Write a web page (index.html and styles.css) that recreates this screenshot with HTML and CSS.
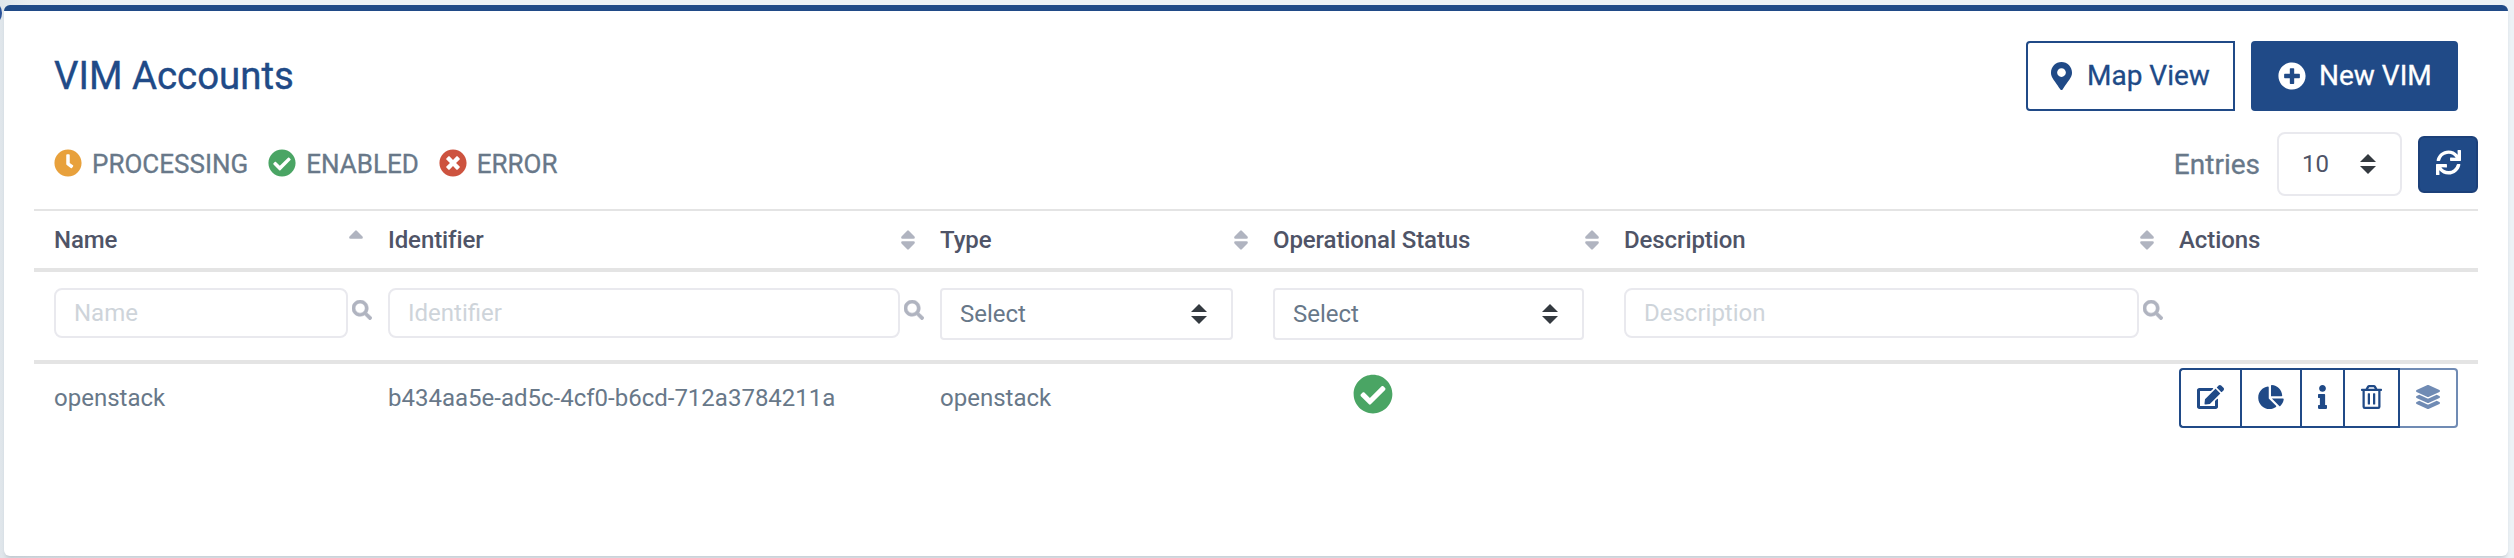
FILE: index.html
```html
<!DOCTYPE html>
<html lang="en">
<head>
<meta charset="utf-8">
<title>VIM Accounts</title>
<link rel="stylesheet" href="styles.css">
</head>
<body>
<svg class="sprite" aria-hidden="true">
  <symbol id="clock" viewBox="0 0 512 512"><path d="M256,8C119,8,8,119,8,256S119,504,256,504,504,393,504,256,393,8,256,8Zm92.49,313h0l-20,25a16,16,0,0,1-22.49,2.5h0l-67-49.72a40,40,0,0,1-15-31.23V112a16,16,0,0,1,16-16h32a16,16,0,0,1,16,16V256l58,42.5A16,16,0,0,1,348.49,321Z"/></symbol>
  <symbol id="check" viewBox="0 0 512 512"><path d="M504 256c0 136.967-111.033 248-248 248S8 392.967 8 256 119.033 8 256 8s248 111.033 248 248zM227.314 387.314l184-184c6.248-6.248 6.248-16.379 0-22.627l-22.627-22.627c-6.248-6.249-16.379-6.249-22.628 0L216 308.118l-70.059-70.059c-6.248-6.248-16.379-6.248-22.628 0l-22.627 22.627c-6.248 6.248-6.248 16.379 0 22.627l104 104c6.249 6.249 16.379 6.249 22.628.001z"/></symbol>
  <symbol id="times" viewBox="0 0 512 512"><path d="M256 8C119 8 8 119 8 256s111 248 248 248 248-111 248-248S393 8 256 8zm121.600 313.100c4.700 4.700 4.700 12.300 0 17L338 377.600c-4.700 4.700-12.300 4.700-17 0L256 312l-65.100 65.600c-4.700 4.700-12.300 4.700-17 0L134.400 338c-4.700-4.700-4.700-12.300 0-17l65.600-65-65.600-65.100c-4.700-4.700-4.700-12.300 0-17l39.600-39.600c4.700-4.700 12.300-4.700 17 0l65 65.700 65.100-65.600c4.700-4.700 12.300-4.700 17 0l39.600 39.600c4.700 4.700 4.700 12.300 0 17L312 256l65.600 65.100z"/></symbol>
  <symbol id="plus" viewBox="0 0 512 512"><path d="M256 8C119 8 8 119 8 256s111 248 248 248 248-111 248-248S393 8 256 8zm144 276c0 6.600-5.400 12-12 12h-92v92c0 6.600-5.400 12-12 12h-56c-6.600 0-12-5.400-12-12v-92h-92c-6.600 0-12-5.400-12-12v-56c0-6.600 5.400-12 12-12h92v-92c0-6.600 5.400-12 12-12h56c6.600 0 12 5.400 12 12v92h92c6.600 0 12 5.400 12 12v56z"/></symbol>
  <symbol id="pin" viewBox="0 0 384 512"><path d="M172.268 501.670C26.970 291.031 0 269.413 0 192 0 85.961 85.961 0 192 0s192 85.961 192 192c0 77.413-26.970 99.031-172.268 309.670-9.535 13.774-29.930 13.773-39.464 0zM192 272c44.183 0 80-35.817 80-80s-35.817-80-80-80-80 35.817-80 80 35.817 80 80 80z"/></symbol>
  <symbol id="sync" viewBox="0 0 512 512"><path d="M440.650 12.570l4 82.770A247.160 247.160 0 0 0 255.830 8C134.730 8 33.910 94.920 12.290 209.820A12 12 0 0 0 24.090 224h49.050a12 12 0 0 0 11.670-9.260 175.910 175.910 0 0 1 317-56.940l-101.460-4.860a12 12 0 0 0-12.570 12v47.410a12 12 0 0 0 12 12H500a12 12 0 0 0 12-12V12a12 12 0 0 0-12-12h-47.370a12 12 0 0 0-11.980 12.570zM255.830 432a175.610 175.610 0 0 1-146-77.800l101.800 4.870a12 12 0 0 0 12.570-12v-47.400a12 12 0 0 0-12-12H12a12 12 0 0 0-12 12V500a12 12 0 0 0 12 12h47.350a12 12 0 0 0 12-12.600l-4.150-82.570A247.170 247.170 0 0 0 255.830 504c121.110 0 221.930-86.920 243.550-201.820a12 12 0 0 0-11.800-14.180h-49.050a12 12 0 0 0-11.670 9.260A175.860 175.860 0 0 1 255.830 432z"/></symbol>
  <symbol id="search" viewBox="0 0 512 512"><path d="M505 442.700L405.300 343c-4.500-4.500-10.600-7-17-7H372c27.600-35.300 44-79.700 44-128C416 93.100 322.900 0 208 0S0 93.100 0 208s93.100 208 208 208c48.300 0 92.700-16.400 128-44v16.300c0 6.400 2.500 12.500 7 17l99.700 99.700c9.400 9.400 24.600 9.400 33.900 0l28.300-28.300c9.400-9.400 9.400-24.600.1-34zM208 336c-70.700 0-128-57.200-128-128 0-70.700 57.200-128 128-128 70.700 0 128 57.200 128 128 0 70.700-57.200 128-128 128z"/></symbol>
  <symbol id="edit" viewBox="0 0 576 512"><path d="M402.600 83.200l90.200 90.200c3.800 3.800 3.800 10 0 13.800L274.400 405.600l-92.800 10.300c-12.400 1.400-22.900-9.100-21.500-21.500l10.300-92.800L388.800 83.200c3.800-3.800 10-3.800 13.800 0zm162-22.900l-48.800-48.800c-15.200-15.200-39.900-15.200-55.200 0l-35.400 35.400c-3.800 3.800-3.800 10 0 13.800l90.200 90.200c3.800 3.800 10 3.800 13.800 0l35.400-35.400c15.200-15.300 15.200-40 0-55.200zM384 346.200V448H64V128h229.800c3.200 0 6.200-1.300 8.500-3.500l40-40c7.600-7.600 2.200-20.500-8.500-20.500H48C21.500 64 0 85.500 0 112v352c0 26.500 21.500 48 48 48h352c26.500 0 48-21.500 48-48V306.200c0-10.700-12.900-16-20.500-8.500l-40 40c-2.200 2.300-3.500 5.300-3.500 8.500z"/></symbol>
  <symbol id="pie" viewBox="0 0 544 512"><path d="M527.790 288H290.500l158.030 158.030c6.040 6.040 15.980 6.530 22.190.68 38.700-36.460 65.320-85.610 73.130-140.860 1.340-9.460-6.510-17.850-16.060-17.850zm-15.830-64.800C503.720 103.740 408.260 8.280 288.800.04 279.680-.59 272 7.100 272 16.240V240h223.770c9.140 0 16.820-7.680 16.190-16.800zM224 288V50.710c0-9.550-8.390-17.400-17.840-16.060C86.990 51.490-4.100 155.600.14 280.370 4.500 408.510 114.830 513.590 243.030 511.980c50.400-.63 96.970-16.870 135.260-44.030 7.900-5.600 8.420-17.230 1.570-24.080L224 288z"/></symbol>
  <symbol id="info" viewBox="0 0 192 512"><path d="M20 424.229h20V279.771H20c-11.046 0-20-8.954-20-20V212c0-11.046 8.954-20 20-20h112c11.046 0 20 8.954 20 20v212.229h20c11.046 0 20 8.954 20 20V492c0 11.046-8.954 20-20 20H20c-11.046 0-20-8.954-20-20v-47.771c0-11.046 8.954-20 20-20zM96 0C56.235 0 24 32.235 24 72s32.235 72 72 72 72-32.235 72-72S135.764 0 96 0z"/></symbol>
  <symbol id="trash" viewBox="0 0 448 512"><path d="M268 416h24a12 12 0 0 0 12-12V188a12 12 0 0 0-12-12h-24a12 12 0 0 0-12 12v216a12 12 0 0 0 12 12zM432 80h-82.410l-34-56.700A48 48 0 0 0 274.410 0H173.590a48 48 0 0 0-41.160 23.300L98.410 80H16A16 16 0 0 0 0 96v16a16 16 0 0 0 16 16h16v336a48 48 0 0 0 48 48h288a48 48 0 0 0 48-48V128h16a16 16 0 0 0 16-16V96a16 16 0 0 0-16-16zM171.840 50.910A6 6 0 0 1 177 48h94a6 6 0 0 1 5.150 2.910L293.610 80H154.390zM368 464H80V128h288zm-212-48h24a12 12 0 0 0 12-12V188a12 12 0 0 0-12-12h-24a12 12 0 0 0-12 12v216a12 12 0 0 0 12 12z"/></symbol>
  <symbol id="layers" viewBox="0 0 512 512"><path d="M12.410 148.020l232.940 105.670c6.800 3.090 14.490 3.090 21.290 0l232.940-105.670c16.550-7.510 16.550-32.520 0-40.030L266.650 2.310a25.607 25.607 0 0 0-21.290 0L12.410 107.980c-16.550 7.510-16.550 32.530 0 40.040zm487.180 88.280l-58.090-26.330-161.640 73.270c-7.560 3.430-15.590 5.170-23.860 5.170s-16.290-1.740-23.860-5.170L70.510 209.970l-58.100 26.330c-16.550 7.500-16.550 32.500 0 40l232.940 105.590c6.800 3.080 14.490 3.080 21.290 0L499.590 276.300c16.550-7.500 16.550-32.500 0-40zm0 127.800l-57.870-26.230-161.860 73.370c-7.560 3.430-15.590 5.170-23.860 5.170s-16.290-1.740-23.860-5.170L70.290 337.870 12.410 364.100c-16.550 7.500-16.550 32.500 0 40l232.940 105.590c6.800 3.080 14.490 3.080 21.290 0L499.590 404.100c16.550-7.500 16.550-32.500 0-40z"/></symbol>
  <symbol id="caret" viewBox="0 0 16 20"><path d="M8 0L16 8H0zM0 12H16L8 20z"/></symbol>
  <symbol id="sort" viewBox="0 0 14 20"><path d="M6.200.7Q7 0 7.800.7L13.500 6.500Q14.500 8.500 12.500 8.700H1.500Q-.5 8.500.5 6.500zM1.500 11.300H12.500Q14.500 11.500 13.500 13.500L7.800 19.300Q7 20 6.200 19.300L.5 13.500Q-.5 11.500 1.500 11.300z"/></symbol>
  <symbol id="sort-up" viewBox="0 0 14 20"><path d="M6.200.7Q7 0 7.800.7L13.500 6.500Q14.500 8.500 12.500 8.700H1.500Q-.5 8.500.5 6.500z"/></symbol>
</svg>
<div class="handle"></div>
<main class="card">
  <header class="card-head">
    <h1 class="title">VIM Accounts</h1>
    <button class="btn btn-outline"><svg class="ic-pin"><use href="#pin"/></svg><span>Map View</span></button>
    <button class="btn btn-solid"><svg class="ic-28"><use href="#plus"/></svg><span>New VIM</span></button>
  </header>
  <section class="toolbar">
    <div class="status processing"><svg class="ic-28"><use href="#clock"/></svg><span>PROCESSING</span></div>
    <div class="status enabled"><svg class="ic-28"><use href="#check"/></svg><span>ENABLED</span></div>
    <div class="status error"><svg class="ic-28"><use href="#times"/></svg><span>ERROR</span></div>
    <span class="entries">Entries</span>
    <div class="select select-entries"><span>10</span><svg class="caret"><use href="#caret"/></svg></div>
    <button class="refresh"><svg><use href="#sync"/></svg></button>
  </section>
  <section class="table">
    <div class="row row-head">
      <div class="th"><span>Name</span><svg class="sort"><use href="#sort-up"/></svg></div>
      <div class="th"><span>Identifier</span><svg class="sort"><use href="#sort"/></svg></div>
      <div class="th"><span>Type</span><svg class="sort"><use href="#sort"/></svg></div>
      <div class="th"><span>Operational Status</span><svg class="sort"><use href="#sort"/></svg></div>
      <div class="th"><span>Description</span><svg class="sort"><use href="#sort"/></svg></div>
      <div class="th"><span>Actions</span></div>
    </div>
    <div class="row row-filter">
      <div class="filter"><div class="input">Name</div><svg class="search"><use href="#search"/></svg></div>
      <div class="filter"><div class="input">Identifier</div><svg class="search"><use href="#search"/></svg></div>
      <div class="select"><span>Select</span><svg class="caret"><use href="#caret"/></svg></div>
      <div class="select"><span>Select</span><svg class="caret"><use href="#caret"/></svg></div>
      <div class="filter"><div class="input">Description</div><svg class="search"><use href="#search"/></svg></div>
      <div></div>
    </div>
    <div class="row row-data">
      <div class="td">openstack</div>
      <div class="td">b434aa5e-ad5c-4cf0-b6cd-712a3784211a</div>
      <div class="td">openstack</div>
      <div class="td state"><svg><use href="#check"/></svg></div>
      <div class="td"></div>
      <div class="actions">
        <button class="act act-edit"><svg><use href="#edit"/></svg></button>
        <button class="act act-pie"><svg><use href="#pie"/></svg></button>
        <button class="act act-info"><svg><use href="#info"/></svg></button>
        <button class="act act-trash"><svg><use href="#trash"/></svg></button>
        <button class="act act-layers"><svg><use href="#layers"/></svg></button>
      </div>
    </div>
  </section>
</main>
</body>
</html>
```

FILE: styles.css
```css
* { box-sizing: border-box; }

body {
  margin: 0;
  height: 558px;
  padding: 5px 6px 2px 4px;
  overflow: hidden;
  background: linear-gradient(90deg, #e0e6eb 0, #e8edf1 30px, #ecf1f5 100px);
  font-family: Roboto, "Liberation Sans", sans-serif;
  font-size: 24px;
  color: #687889;
}

svg { display: block; flex: none; fill: currentColor; }
.sprite { position: absolute; width: 0; height: 0; }

/* round toggle of the side menu, mostly off screen */
.handle {
  position: absolute;
  left: -24px;
  top: 0;
  width: 26px;
  height: 26px;
  border-radius: 50%;
  background: #2a5298;
}

.card {
  height: 551px;
  border-top: 6px solid #204a87;
  border-radius: 6px;
  background: #fff;
  box-shadow: 0 4px 4px -2px rgba(60, 80, 95, .25);
}

.card-head {
  display: flex;
  align-items: center;
  height: 100px;
  margin-top: 15px;
  padding: 0 50px;
}
.title {
  flex: 1;
  margin: 0;
  font-size: 38.4px;
  line-height: 48px;
  font-weight: 400;
  color: #204a87;
  -webkit-text-stroke: .4px #204a87;
}
.btn {
  display: flex;
  align-items: center;
  height: 70px;
  border: 2px solid #204a87;
  border-radius: 4px;
  font: 400 28px/40px Roboto, sans-serif;
}
.btn-outline {
  width: 209px;
  padding: 0 0 0 23px;
  gap: 15px;
  border-radius: 4px 0 0 4px;
  background: #fff;
  color: #204a87;
}
.btn-solid {
  width: 207px;
  margin-left: 16px;
  padding: 0 0 0 25px;
  gap: 13px;
  background: #204a87;
  color: #fff;
}
.btn span, .entries, .status span { -webkit-text-stroke: .3px currentColor; }
.ic-28 { width: 28px; height: 28px; }
.ic-pin { width: 21px; height: 28px; }

.toolbar {
  display: flex;
  align-items: center;
  height: 64px;
  margin-top: 6px;
  padding: 0 30px 0 50px;
}
.status { display: flex; align-items: center; font-size: 26px; }
.status svg { margin: -2px 10px 0 0; }
.status + .status { margin-left: 20px; }
.processing svg { color: #e8a13c; }
.enabled svg { color: #4aa564; }
.error svg { color: #cd533f; }
.entries { margin-left: auto; margin-right: 17px; font-size: 28px; }

.select {
  display: flex;
  align-items: center;
  justify-content: space-between;
  height: 52px;
  padding: 0 24px 0 18px;
  border: 2px solid #e9e9ee;
  border-radius: 4px;
}
.caret { width: 16px; height: 20px; color: #343a40; }
.select-entries {
  width: 125px;
  height: 64px;
  padding-left: 23px;
  border-radius: 8px;
  color: #4f5467;
}
.refresh {
  display: flex;
  align-items: center;
  justify-content: center;
  width: 60px;
  height: 57px;
  margin-left: 16px;
  padding: 0 0 4px;
  border: 2px solid #1c4079;
  border-radius: 6px;
  background: #204a87;
  color: #fff;
}
.refresh svg { width: 25px; height: 25px; }

.table { margin: 13px 30px 0; border-top: 2px solid #e4e4e4; }
.row {
  display: grid;
  grid-template-columns: 334px 552px 333px 351px 555px 279px;
  padding-left: 20px;
}
.row-head {
  height: 61px;
  align-items: center;
  border-bottom: 4px solid #e4e4e4;
  font-weight: 500;
  letter-spacing: -.1px;
  color: #4f5467;
}
.th {
  display: flex;
  align-items: center;
  justify-content: space-between;
  padding-right: 25px;
}
.th span { line-height: 28px; }
.sort { width: 14px; height: 20px; color: #b0b4c0; }

.row-filter {
  height: 92px;
  padding-top: 16px;
  align-items: start;
  border-bottom: 4px solid #e4e4e4;
}
.row-filter .select { margin-right: 40px; }
.filter { display: flex; padding-right: 16px; }
.input {
  flex: 1;
  height: 50px;
  padding-left: 18px;
  border: 2px solid #e9e9ee;
  border-radius: 8px;
  line-height: 46px;
  color: #ced4da;
}
.search {
  width: 20px;
  height: 20px;
  margin: 12px 0 0 4px;
  color: #b0b4c0;
  stroke: currentColor;
  stroke-width: 14px;
}

.row-data { height: 68px; align-items: center; }
.state { padding: 0 0 8px 80px; }
.state svg { width: 40px; height: 40px; color: #4aa564; }

.actions { display: flex; }
.act {
  display: flex;
  align-items: center;
  justify-content: center;
  height: 60px;
  padding: 0 0 2px;
  border: 2px solid #204a87;
  border-right-width: 0;
  background: #fff;
  color: #204a87;
}
.act svg { height: 24px; }
.act-edit { width: 61px; border-radius: 4px 0 0 4px; }
.act-edit svg { width: 27px; }
.act-pie { width: 60px; }
.act-pie svg { width: 26px; }
.act-info { width: 43px; }
.act-info svg { width: 9px; }
.act-trash { width: 57px; border-right-width: 2px; }
.act-trash svg { width: 21px; }
.act-layers {
  width: 58px;
  border-width: 2px 2px 2px 0;
  border-radius: 0 4px 4px 0;
  border-color: #708bb4;
  color: #708bb4;
}
.act-layers svg { width: 24px; }
```
